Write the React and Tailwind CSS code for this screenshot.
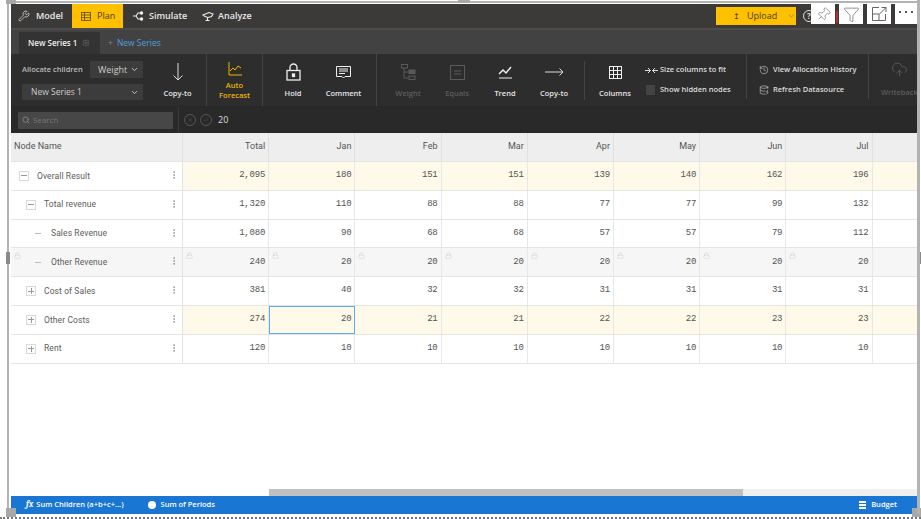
import React from "react";
import { ChevronDown, Search, Lock, Wrench, Pin, Funnel, Settings, CloudUpload, Check, X, History, DatabaseZap, MoreVertical } from "lucide-react";

const F = { fontFamily: '"Open Sans", "Noto Sans", sans-serif' };
const M = { fontFamily: '"Liberation Mono", monospace' };
const R = { fontFamily: 'Roboto, "Open Sans", sans-serif' };

const rows = [
  { name: "Overall Result", lvl: 0, icon: "minus", v: ["2,095", "180", "151", "151", "139", "140", "162", "196"], hl: true },
  { name: "Total revenue", lvl: 1, icon: "minus", v: ["1,320", "110", "88", "88", "77", "77", "99", "132"] },
  { name: "Sales Revenue", lvl: 2, icon: "dash", v: ["1,080", "90", "68", "68", "57", "57", "79", "112"] },
  { name: "Other Revenue", lvl: 2, icon: "dash", v: ["240", "20", "20", "20", "20", "20", "20", "20"], locked: true },
  { name: "Cost of Sales", lvl: 1, icon: "plus", v: ["381", "40", "32", "32", "31", "31", "31", "31"] },
  { name: "Other Costs", lvl: 1, icon: "plus", v: ["274", "20", "21", "21", "22", "22", "23", "23"], hl: true, sel: true },
  { name: "Rent", lvl: 1, icon: "plus", v: ["120", "10", "10", "10", "10", "10", "10", "10"] },
];
const cols = ["Total", "Jan", "Feb", "Mar", "Apr", "May", "Jun", "Jul"];
const grid = "grid grid-cols-[172px_repeat(8,86.2px)_1fr]";

function Box({ kind }) {
  if (kind === "dash") return <span className="w-[10px] h-[10px] flex items-center justify-center"><span className="w-[6px] h-px bg-[#bbb]" /></span>;
  return (
    <span className="w-[10px] h-[10px] border border-[#d8d8d8] flex items-center justify-center relative">
      <span className="w-[6px] h-px bg-[#999]" />
      {kind === "plus" && <span className="absolute w-px h-[6px] bg-[#999]" />}
    </span>
  );
}

function Row({ r }) {
  const bg = r.hl ? "bg-[#fff9e9]" : r.locked ? "bg-[#f6f6f6]" : "bg-white";
  const pad = ["pl-[8px]", "pl-[15px]", "pl-[22px]"][r.lvl];
  return (
    <div className={`${grid} h-[28.8px] border-b border-[#e4e4e4] ${r.locked ? "bg-[#f6f6f6]" : "bg-white"}`}>
      <div className={`relative flex items-center ${pad} border-r border-[#e4e4e4] gap-[8px] ${r.locked ? "bg-[#f6f6f6]" : "bg-white"}`}>
        {r.locked && <Lock size={7} strokeWidth={1.5} className="absolute left-[3px] top-[4px] text-[#ccc]" />}
        <Box kind={r.icon} />
        <span className="text-[8.5px] tracking-[0.1px] text-[#5c5c5c] leading-none" style={R}>{r.name}</span>
        <MoreVertical size={10} strokeWidth={1.5} className="absolute right-[3px] top-[8px] text-[#777]" />
      </div>
      {r.v.map((v, i) => {
        const sel = r.sel && i === 1;
        return (
          <div key={i} className={`relative flex items-center justify-end pr-[3px] border-r border-[#e8e8e8] ${bg} ${sel ? "outline outline-1 -outline-offset-1 outline-[#5aaef0]" : ""}`}>
            {r.locked && <Lock size={7} strokeWidth={1.5} className="absolute left-[3px] top-[4px] text-[#ccc]" />}
            <span className="text-[9px] tracking-[-0.2px] text-[#555]" style={M}>{v}</span>
          </div>
        );
      })}
      <div className={bg} />
    </div>
  );
}

function Tool({ cls, icon, label, label2, tone = "text-[#e6e6e6]", iconH = "h-[20px]", labelM = "mt-[6px]" }) {
  return (
    <div className={`flex flex-col items-center h-[52px] pt-[8px] shrink-0 ${cls}`}>
      <div className={`${iconH} flex items-center justify-center`}>{icon}</div>
      <div className={`${labelM} text-[7.5px] leading-[10px] font-semibold text-center ${tone}`} style={F}>
        {label}{label2 && <br />}{label2}
      </div>
    </div>
  );
}

export default function App() {
  return (
    <div className="relative w-[921px] h-[519px] bg-white overflow-hidden pl-[11px] pr-[4px] pt-[4px] pb-[5px]" style={F}>
      <div className="flex flex-col h-full">
        {/* top bar */}
        <div className="h-[24px] bg-[#3b3a38] flex items-center shrink-0 text-[#e8e8e8] text-[9px] font-semibold">
          <div className="flex items-center gap-[6px] pl-[7px] w-[61px]"><Wrench size={12} strokeWidth={1.4} />Model</div>
          <div className="flex items-center gap-[6px] bg-[#ffc000] h-full w-[51px] pl-[9px] text-[#4a3d10] font-normal">
            <svg width="10" height="9" viewBox="0 0 10 9" fill="none" stroke="#5a4a10" strokeWidth="0.8"><rect x=".5" y=".5" width="9" height="8" /><path d="M.5 3h9M.5 5.700h9M3.500.5v8" /></svg>
            Plan
          </div>
          <div className="flex items-center gap-[5px] pl-[9px] w-[79px]">
            <svg width="12" height="12" viewBox="0 0 12 12" fill="none" stroke="#eee" strokeWidth="1.1"><path d="M1 6h3l2-3h3M4 6l2 3h3" /><circle cx="9.500" cy="3" r="1.200" fill="#eee" /><circle cx="9.500" cy="9" r="1.200" fill="#eee" /></svg>
            Simulate
          </div>
          <div className="flex items-center gap-[4px] w-[70px]">
            <svg width="12" height="12" viewBox="0 0 12 12" fill="none" stroke="#eee" strokeWidth="1.100"><path d="M1 5l6-2.500 4 1.500-1.500 2.500L6 7.500 3 6.500z" /><path d="M5.500 7.500v3M3.500 10.500h4" /></svg>
            Analyze
          </div>
          <div className="ml-auto mr-[121px] w-[80px] h-[18px] bg-[#ffc000] flex items-center pl-[17px] text-[#4a3d10] font-normal gap-[7px]">
            <span className="text-[8px] leading-none">↥</span>
            <span>Upload</span>
            <ChevronDown size={10} strokeWidth={1} className="ml-[3px]" />
          </div>
        </div>
        {/* tabs */}
        <div className="h-[26px] bg-[#424242] border-t-[2px] border-[#4c4c4c] flex items-end pl-[8px] shrink-0">
          <div className="h-[22px] w-[81px] bg-[#333] flex items-center pl-[9px] gap-[5px]">
            <span className="text-[8px] font-semibold text-[#eee]">New Series 1</span>
            <Settings size={8} strokeWidth={1.5} className="text-[#777]" />
          </div>
          <div className="h-[22px] flex items-center gap-[4px] ml-[8px] text-[8.5px]">
            <span className="text-[#888]">+</span><span className="text-[#4e9fdc]">New Series</span>
          </div>
        </div>
        {/* ribbon */}
        <div className="h-[53px] bg-[#2d2d2d] flex shrink-0 border-b border-[#262626]">
          <div className="w-[138px] pl-[11px] pr-[6px] pt-[7px] shrink-0 flex flex-col gap-[6px]">
            <div className="flex items-center justify-between">
              <span className="text-[7.5px] font-semibold text-[#bbb]">Allocate children</span>
              <div className="w-[53px] h-[17px] bg-[#3c3c3c] flex items-center justify-between pl-[8px] pr-[4px] text-[9px] text-[#ccc]">Weight<ChevronDown size={9} strokeWidth={2.500} /></div>
            </div>
            <div className="h-[16px] bg-[#3c3c3c] flex items-center justify-between pl-[9px] pr-[4px] text-[8.5px] text-[#ccc]">New Series 1<ChevronDown size={9} strokeWidth={2.500} /></div>
          </div>
          <Tool cls="w-[58px] border-r border-[#444]" label="Copy-to" icon={<svg width="12" height="20" viewBox="0 0 12 20" fill="none" stroke="#ddd"><path d="M6 1v17M1.500 13.500 6 18l4.500-4.500" /></svg>} />
          <Tool cls="w-[56px] border-r border-[#444]" label="Auto" label2="Forecast" iconH="h-[14px]" labelM="mt-[4px]" tone="text-[#f0b400]" icon={<svg width="14" height="14" viewBox="0 0 14 14" fill="none" stroke="#f0b400"><path d="M1 0v13h13M2 9l3-3 2 2 3-4 3 2" /></svg>} />
          <Tool cls="w-[60px]" label="Hold" icon={<svg width="15" height="18" viewBox="0 0 15 18" fill="none" stroke="#eee" strokeWidth="1.300"><rect x="1" y="7.500" width="13" height="9.500" /><path d="M4 7.500V4.500a3.500 3.500 0 0 1 7 0v3" /><rect x="6.500" y="11" width="2" height="2.500" fill="#eee" /></svg>} />
          <Tool cls="w-[54px] pr-[12px] border-r border-[#444]" label="Comment" icon={<svg width="15" height="15" viewBox="0 0 15 15" fill="none" stroke="#eee"><path d="M.5 1.500h14v10H9L7.500 13 6 11.500H.5z" /><path d="M3 4h9M3 6h9M3 8.500h6" /></svg>} />
          <Tool cls="w-[62px]" label="Weight" tone="text-[#5d5d5d]" icon={<svg width="15" height="16" viewBox="0 0 15 16" fill="none" stroke="#5a5a5a"><rect x=".5" y=".5" width="6" height="3.500" /><rect x="8" y="6" width="6" height="3.500" fill="#5a5a5a" /><rect x="8" y="12" width="6" height="3.500" /><path d="M3 4v10h5M3 8h5" /></svg>} />
          <Tool cls="w-[36px]" label="Equals" tone="text-[#5d5d5d]" icon={<svg width="15" height="15" viewBox="0 0 15 15" fill="none" stroke="#5a5a5a"><rect x=".5" y=".5" width="14" height="14" /><path d="M4 6h7M4 9h7" /></svg>} />
          <Tool cls="w-[60px]" label="Trend" icon={<svg width="15" height="14" viewBox="0 0 15 14" fill="none" stroke="#eee"><path d="M1 13h13" /><path strokeWidth="1.500" d="M1 9l4-4 3 3 5-6" /></svg>} />
          <Tool cls="w-[38px]" label="Copy-to" icon={<svg width="19" height="10" viewBox="0 0 19 10" fill="none" stroke="#ddd"><path d="M0 5h18M14.500 1.500 18 5l-3.500 3.500" /></svg>} />
          <div className="w-[12px] shrink-0 flex items-start justify-end pt-[7px]"><div className="w-px h-[39px] bg-[#444]" /></div>
          <Tool cls="w-[60px]" label="Columns" icon={<svg width="13" height="13" viewBox="0 0 13 13" fill="none" stroke="#eee"><rect x=".5" y=".5" width="12" height="12" /><path d="M4.500.5v12M8.500.5v12M.5 4.500h12M.5 8.500h12" /></svg>} />
          <div className="w-[102px] shrink-0 pt-[10px] border-r border-[#444] mb-[7px] flex flex-col gap-[8px] text-[7.500px] font-semibold text-[#ddd]">
            <div className="flex items-center gap-[2px] h-[12px]">
              <svg width="13" height="7" viewBox="0 0 13 7" fill="none" stroke="#ddd"><path d="M0 3.500h5M3 1l2.500 2.500L3 6M13 3.500H8M10 1 7.500 3.500 10 6" /></svg>
              Size columns to fit
            </div>
            <div className="flex items-center gap-[5px] h-[12px] pl-[1px]"><span className="w-[9px] h-[10px] bg-[#444] block" />Show hidden nodes</div>
          </div>
          <div className="w-[122px] shrink-0 pt-[10px] border-r border-[#444] mb-[7px] flex flex-col gap-[8px] text-[7.500px] font-semibold text-[#ddd] pl-[12px]">
            <div className="flex items-center gap-[4px] h-[12px]"><History size={10} strokeWidth={1.300} />View Allocation History</div>
            <div className="flex items-center gap-[4px] h-[12px]"><DatabaseZap size={10} strokeWidth={1.300} />Refresh Datasource</div>
          </div>
          <div className="w-[48px] overflow-hidden pt-[7px] flex flex-col items-start pl-[22px]">
            <CloudUpload size={17} strokeWidth={1} className="text-[#666]" />
            <span className="mt-[9px] -ml-[10px] text-[7.500px] font-semibold text-[#5d5d5d]">Writeback</span>
          </div>
        </div>
        {/* search */}
        <div className="h-[26px] bg-[#292929] flex items-center shrink-0">
          <div className="w-[168px] h-full flex items-center pl-[7px] border-r border-[#3a3a3a]">
            <div className="w-[155px] h-[17px] bg-[#474747] rounded-[1px] flex items-center pl-[4px] gap-[3px] text-[8px] text-[#777]"><Search size={8} className="text-[#999]" />Search</div>
          </div>
          <div className="flex items-center pl-[5px] gap-[4px]">
            <span className="w-[12px] h-[12px] rounded-full border border-[#555] flex items-center justify-center"><X size={6} className="text-[#555]" /></span>
            <span className="w-[12px] h-[12px] rounded-full border border-[#555] flex items-center justify-center"><Check size={6} className="text-[#555]" /></span>
            <span className="ml-[2px] text-[9px] text-[#ddd]">20</span>
          </div>
        </div>
        {/* table */}
        <div className={`${grid} h-[29px] bg-[#eeeeee] shrink-0 border-b border-[#e4e4e4]`}>
          <div className="flex items-center pl-[3px] text-[9px] text-[#555] border-r border-[#e0e0e0]" style={R}>Node Name</div>
          {cols.map((c) => (
            <div key={c} className="flex items-center justify-end pr-[3px] text-[9px] text-[#555] border-r border-[#e0e0e0]" style={R}>{c}</div>
          ))}
          <div />
        </div>
        <div className="flex-1 bg-white min-h-0">
          {rows.map((r) => <Row key={r.name} r={r} />)}
        </div>
        <div className="h-[7px] shrink-0 flex pl-[258px]">
          <div className="flex-1 bg-[#f0f0f0]"><div className="w-[474px] h-full bg-[#c0c0c0]" /></div>
        </div>
        <div className="h-[18px] shrink-0 bg-[#1976d2] flex items-center text-[7.500px] text-white font-semibold pl-[15px]">
          <span className="italic font-serif mr-[3px] text-[9px]">fx</span>
          <span>Sum Children (a+b+c+...)</span>
          <span className="w-[8px] h-[8px] rounded-full bg-white ml-[24px] mr-[5px]" />
          <span>Sum of Periods</span>
          <span className="ml-auto flex flex-col gap-px w-[7px] mr-[5px]">
            <span className="h-[2px] bg-white" /><span className="h-[2px] bg-white" /><span className="h-[2px] bg-white" />
          </span>
          <span className="mr-[20px]">Budget</span>
        </div>
      </div>

      {/* overlays: report frame */}
      <div className="absolute left-[7px] top-[1px] right-[1px] bottom-[3px] border-l-2 border-t-2 border-[#b3b3b3]" />
      <div className="absolute left-[6px] top-0 w-[10px] h-[4px] bg-[#a8a8a8]" />
      <div className="absolute left-[458px] top-0 w-[12px] h-[3px] bg-[#a8a8a8]" />
      <div className="absolute left-[6px] top-[252px] w-[4px] h-[12px] bg-[#8a8a8a]" />
      <div className="absolute right-0 top-[252px] w-[3px] h-[12px] bg-[#8a8a8a]" />
      <div className="absolute left-[6px] bottom-[2px] w-[10px] h-[9px] bg-[#a8a8a8]" />
      <div className="absolute right-0 bottom-[2px] w-[9px] h-[9px] bg-[#a8a8a8]" />
      <div className="absolute left-0 right-0 bottom-0 border-b-2 border-dotted border-[#777]" />
      <div className="absolute right-[1px] top-0 bottom-[5px] w-[3px] bg-[#b3b3b3]" />

      {/* overlays: header toolbar */}
      <span className="absolute left-[803px] top-[10px] w-[12px] h-[12px] rounded-full border border-[#ddd] text-[8px] leading-[10px] text-center text-[#ddd] font-bold">?</span>
      <span className="absolute left-[836px] top-[11px] w-[2px] h-[12px] bg-[#b03030]" />
      <div className="absolute left-[811px] top-[4px] w-[24px] h-[20px] bg-white flex items-center justify-center text-[#666]"><Pin size={15} strokeWidth={1} className="rotate-45" /></div>
      <div className="absolute left-[839px] top-[4px] w-[24px] h-[20px] bg-white flex items-center justify-center text-[#666]"><Funnel size={17} strokeWidth={1} /></div>
      <div className="absolute left-[867px] top-[4px] w-[24px] h-[20px] bg-white flex items-center justify-center">
        <svg width="15" height="14" viewBox="0 0 15 14" fill="none" stroke="#666"><path d="M7 .5H.5v13h13V7" /><path d="M7.500 7 14 .5M9.500.5H14V5" /><path d="M.5 7H7v6.500" /></svg>
      </div>
      <div className="absolute left-[895px] top-[4px] w-[22px] h-[20px] bg-white flex items-center justify-center gap-[4px] pb-[4px]">
        <span className="w-[2px] h-[2px] bg-[#555]" /><span className="w-[2px] h-[2px] bg-[#555]" /><span className="w-[2px] h-[2px] bg-[#555]" />
      </div>
    </div>
  );
}
